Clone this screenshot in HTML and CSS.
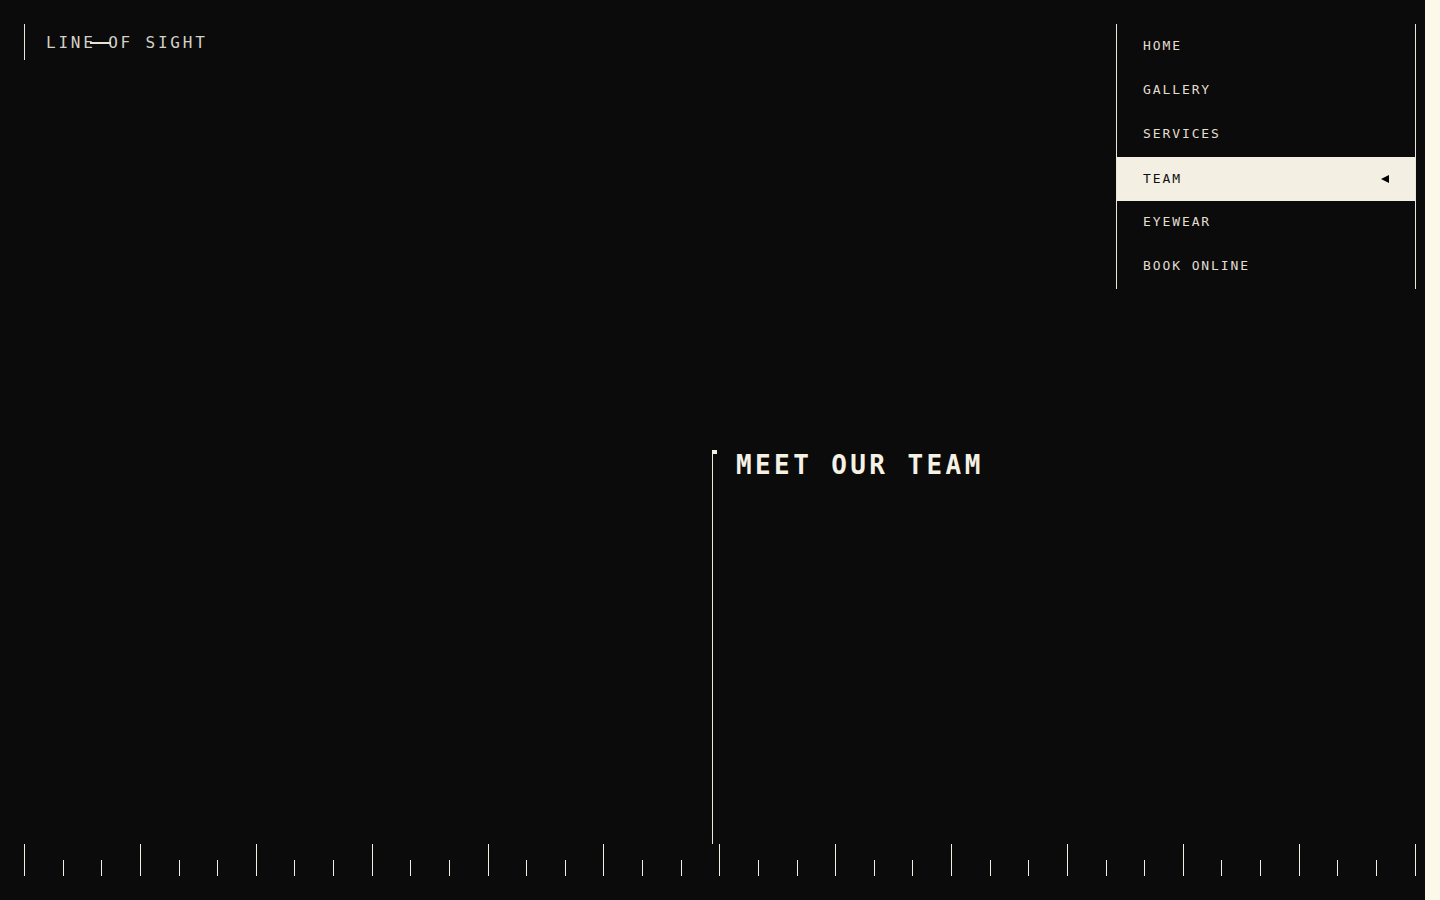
FILE: index.html
```html
<!DOCTYPE html>
<html lang="en">
<head>
<meta charset="utf-8">
<title>Line of Sight — Team</title>
<link rel="stylesheet" href="styles.css">
</head>
<body>
<div class="page">
  <main class="main">
    <header class="header">
      <div class="logo"><span class="logo-text">LINE OF SIGHT</span></div>
      <nav class="nav">
        <a class="nav-item" href="#">HOME</a>
        <a class="nav-item" href="#">GALLERY</a>
        <a class="nav-item" href="#">SERVICES</a>
        <a class="nav-item active" href="#">TEAM<span class="arrow"></span></a>
        <a class="nav-item" href="#">EYEWEAR</a>
        <a class="nav-item" href="#">BOOK ONLINE</a>
      </nav>
    </header>
    <section class="stage">
      <div class="team">
        <h1 class="team-title">MEET OUR TEAM</h1>
      </div>
    </section>
    <div class="ruler">
      <i class="tick major"></i><i class="tick"></i><i class="tick"></i>
      <i class="tick major"></i><i class="tick"></i><i class="tick"></i>
      <i class="tick major"></i><i class="tick"></i><i class="tick"></i>
      <i class="tick major"></i><i class="tick"></i><i class="tick"></i>
      <i class="tick major"></i><i class="tick"></i><i class="tick"></i>
      <i class="tick major"></i><i class="tick"></i><i class="tick"></i>
      <i class="tick major"></i><i class="tick"></i><i class="tick"></i>
      <i class="tick major"></i><i class="tick"></i><i class="tick"></i>
      <i class="tick major"></i><i class="tick"></i><i class="tick"></i>
      <i class="tick major"></i><i class="tick"></i><i class="tick"></i>
      <i class="tick major"></i><i class="tick"></i><i class="tick"></i>
      <i class="tick major"></i><i class="tick"></i><i class="tick"></i>
      <i class="tick major"></i>
    </div>
  </main>
  <aside class="strip"></aside>
</div>
</body>
</html>
```

FILE: styles.css
```css
* { box-sizing: border-box; }

html, body {
  margin: 0;
  padding: 0;
  height: 100%;
}

body {
  background: #0b0b0b;
  font-family: "DejaVu Sans Mono", "Liberation Mono", monospace;
  color: #ebe7db;
  overflow: hidden;
}

.page {
  display: grid;
  grid-template-columns: 1fr 15px;
  width: 1440px;
  height: 900px;
}

.strip {
  background: #fdf9ea;
}

.main {
  display: flex;
  flex-direction: column;
  height: 900px;
  padding: 24px 9px 24px 24px;
  background: #0b0b0b;
}

.header {
  display: flex;
  justify-content: space-between;
  align-items: flex-start;
}

.logo {
  display: flex;
  align-items: center;
  height: 36px;
  border-left: 1px solid #e9e6dc;
  padding-left: 21px;
}

.logo-text {
  position: relative;
  font-size: 16px;
  letter-spacing: 2.8px;
  color: #d4d1c8;
  line-height: 1;
  padding-top: 1px;
}

.logo-text::after {
  content: "";
  position: absolute;
  left: 44px;
  top: 50%;
  width: 21px;
  height: 1.5px;
  background: #e6e3da;
}

.nav {
  display: flex;
  flex-direction: column;
  width: 300px;
  padding-top: 1px;
  border-left: 1px solid #e9e6dc;
  border-right: 1px solid #e9e6dc;
}

.nav-item {
  display: flex;
  align-items: center;
  justify-content: space-between;
  height: 44px;
  padding: 0 26px 4px 26px;
  font-size: 13px;
  letter-spacing: 1.9px;
  color: #e2ded2;
  text-decoration: none;
}

.nav-item.active {
  background: #f3efe3;
  color: #111;
  padding-bottom: 2px;
}

.arrow {
  display: block;
  width: 0;
  height: 0;
  margin-top: 2px;
  border-top: 4.5px solid transparent;
  border-bottom: 4.5px solid transparent;
  border-right: 8px solid #000;
}

.stage {
  flex: 1;
  display: flex;
  align-items: stretch;
  padding-top: 161px;
}

.team {
  position: relative;
  margin-left: 688px;
  border-left: 1.5px solid #eeeae0;
  padding-left: 23px;
}

.team::before {
  content: "";
  position: absolute;
  left: -1px;
  top: 0;
  width: 5px;
  height: 4px;
  background: #f3efe3;
}

.team-title {
  margin: 0;
  font-size: 26px;
  font-weight: bold;
  letter-spacing: 3.4px;
  line-height: 1;
  color: #f5f1e3;
  padding-top: 2px;
}

.ruler {
  display: flex;
  justify-content: space-between;
  align-items: flex-end;
  height: 32px;
  width: 1392px;
}

.tick {
  display: block;
  width: 1px;
  height: 16px;
  background: #f2eee4;
}

.tick.major {
  height: 32px;
}
```
